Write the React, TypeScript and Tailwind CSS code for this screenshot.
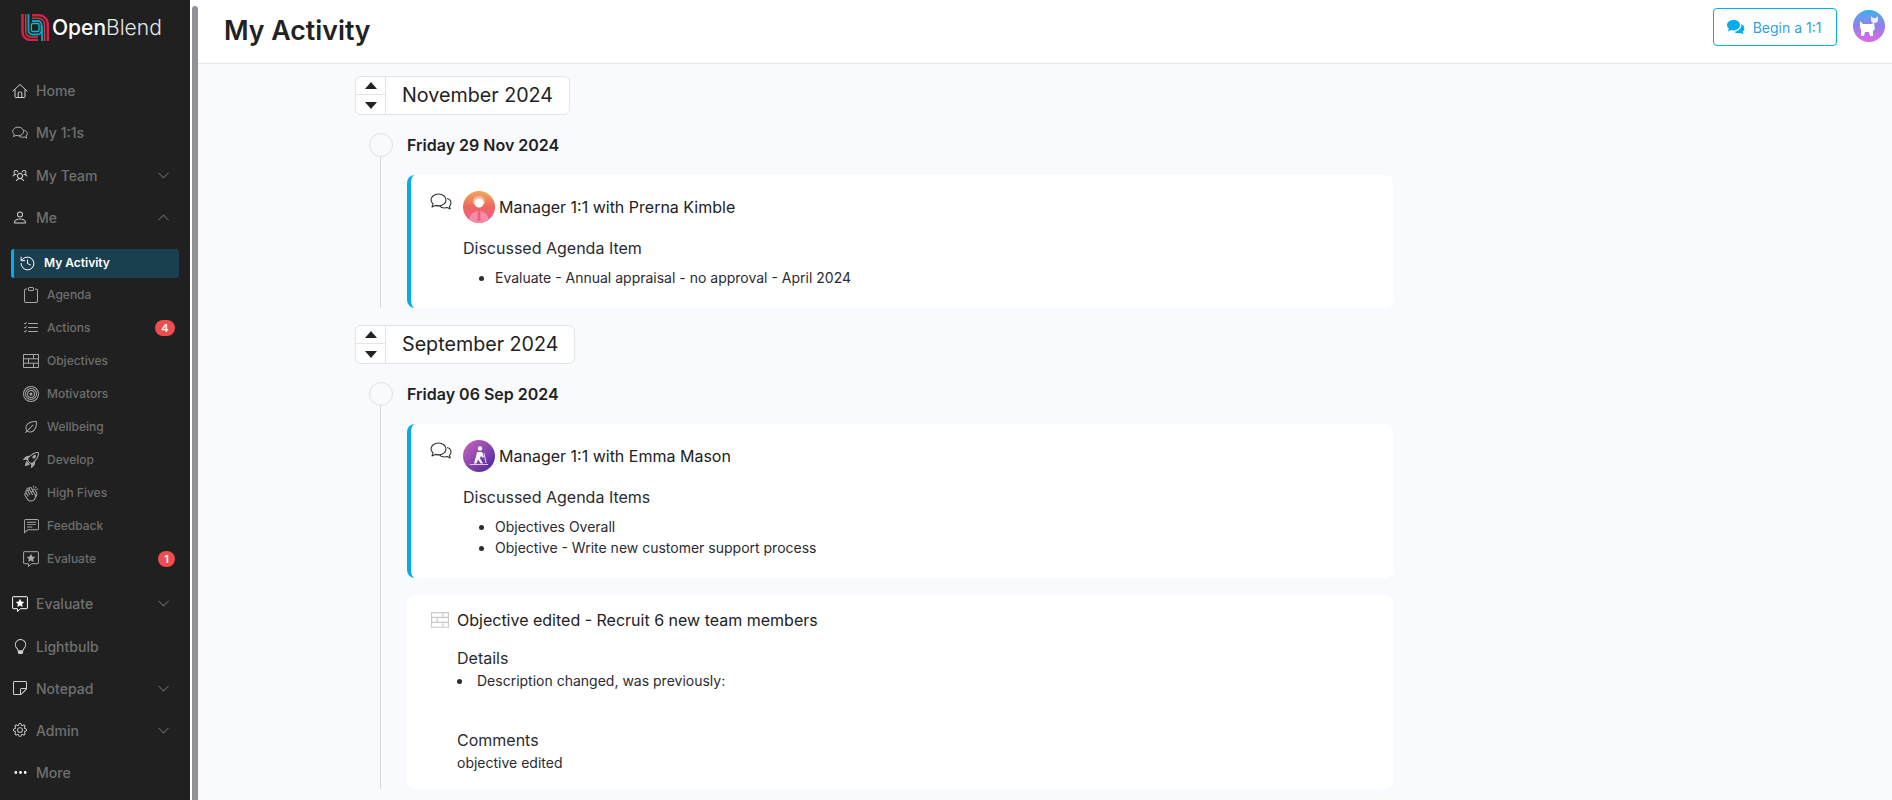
import type { ReactNode } from "react";
import {
  BsBullseye,
  BsChatLeftText,
  BsChevronDown,
  BsChevronUp,
  BsClipboard,
  BsGear,
  BsLightbulb,
  BsListCheck,
  BsPerson,
  BsRocketTakeoff,
  BsSticky,
  BsThreeDots,
} from "react-icons/bs";
import { PiHandsClapping, PiLeaf, PiUsersThree } from "react-icons/pi";
import { History } from "lucide-react";

const HomeIcon = () => (
  <svg width="16" height="16" viewBox="0 0 16 16" fill="none" stroke="currentColor" strokeWidth="1">
    <path d="M1 8l7-6.500L15 8" strokeLinecap="round" strokeLinejoin="round" />
    <path d="M3 6.500v7a1 1 0 0 0 1 1h8a1 1 0 0 0 1-1v-7" />
    <path d="M6.200 14.500V10a1 1 0 0 1 1-1h1.600a1 1 0 0 1 1 1v4.500" />
  </svg>
);

const ChatsIcon = ({ width = 17 }: { width?: number }) => (
  <svg width={width} height={(width * 17) / 22} viewBox="0 0 22 17" fill="none" stroke="currentColor" strokeWidth="1.100">
    <path d="M8.500 1C4.400 1 1 3.600 1 6.800c0 1.600.8 3 2.100 4.100L2 14l3.400-1.600c1 .3 2 .5 3.100.5 4.100 0 7.500-2.700 7.500-6S12.600 1 8.500 1z" strokeLinejoin="round" />
    <path d="M17 5.500c2.400.6 4 2.400 4 4.500 0 1.300-.6 2.500-1.600 3.400l.8 2.600-3-1.400c-.8.3-1.700.4-2.700.4-2 0-3.800-.7-4.900-1.800" strokeLinejoin="round" />
  </svg>
);

const ChatsFillIcon = () => (
  <svg width="20" height="16" viewBox="0 0 20 16" fill="#00aeef">
    <path d="M7.500 1C3.900 1 1 3.200 1 6c0 1.400.7 2.600 1.900 3.500L2 12.500l3.200-1.400c.7.2 1.500.3 2.300.3 3.600 0 6.500-2.300 6.500-5.400S11.100 1 7.500 1z" />
    <path d="M15.300 5c.1.300.1.700.1 1 0 3.400-3 6.200-7 6.700 1 1 2.500 1.500 4.100 1.500.7 0 1.400-.1 2-.3l2.900 1.300-.7-2.600c1-.8 1.600-1.900 1.600-3.100 0-1.900-1.200-3.600-3-4.500z" />
  </svg>
);

const BricksIcon = ({ width = 16 }: { width?: number }) => (
  <svg width={width} height={(width * 14) / 16} viewBox="0 0 16 14" fill="none" stroke="currentColor" strokeWidth="1">
    <path d="M.5.500h15v13H.5zM.5 4.800h15M.5 9.200h15M10.500.500v4.300M5.500 4.800v4.400M10.500 9.200v4.300" />
  </svg>
);

const StarChat = ({ size = 16 }: { size?: number }) => (
  <svg width={size} height={size} viewBox="0 0 16 16" fill="none">
    <path
      d="M1.200.700h13.600a.6.6 0 0 1 .6.6v10.800a.6.6 0 0 1-.6.6H8.500L5.500 15.500v-2.800H1.200a.6.6 0 0 1-.6-.6V1.300a.6.6 0 0 1 .6-.6z"
      stroke="currentColor"
      strokeWidth="1"
    />
    <path d="M8 2.800l1.300 2.700 3 .4-2.200 2 .6 3L8 9.400l-2.700 1.500.6-3-2.200-2 3-.4z" fill="currentColor" />
  </svg>
);

const Logo = () => (
  <svg width="28" height="27" viewBox="0 0 28 27" fill="none">
    <path d="M1.500 0v18a8 8 0 0 0 8 8H17" stroke="#d81e4a" strokeWidth="2.500" />
    <path d="M4.700 0v17.500a5.500 5.500 0 0 0 5.500 5.500H17" stroke="#b8413f" strokeWidth="1.600" />
    <path d="M11 1.200h7a8.800 8.800 0 0 1 8.800 8.800v17" stroke="#d81e4a" strokeWidth="2.400" />
    <path d="M11 4.200h6.500a6 6 0 0 1 6 6V27" stroke="#b8413f" strokeWidth="1.600" />
    <path d="M7.500 0v16.500a4 4 0 0 0 4 4h5a4 4 0 0 0 4-4v-6a3.500 3.500 0 0 0-3.500-3.500H11" stroke="#12a3c4" strokeWidth="1.800" />
    <path d="M21 12v15" stroke="#12a3c4" strokeWidth="1.800" />
    <path d="M10.400 11v5a1.500 1.500 0 0 0 1.500 1.500H16.500A1.500 1.500 0 0 0 18 16v-5a1.500 1.500 0 0 0-1.500-1.500H11.900A1.500 1.500 0 0 0 10.400 11z" stroke="#1bb7cf" strokeWidth="1.300" />
  </svg>
);

const TopItem = ({
  icon,
  label,
  chevron,
  white,
}: {
  icon: ReactNode;
  label: string;
  chevron?: "up" | "down";
  white?: boolean;
}) => (
  <div className="flex h-[42.2px] shrink-0 items-center pl-[12px] pr-[20px]">
    <span className={`flex w-[16px] justify-center ${white ? "text-white" : "text-[#d0d0d0]"}`}>{icon}</span>
    <span className="ml-[8px] flex-1 text-[14px] font-medium text-[#707070]">{label}</span>
    {chevron === "down" && <BsChevronDown size={13} className="text-[#707070]" />}
    {chevron === "up" && <BsChevronUp size={13} className="text-[#707070]" />}
  </div>
);

const SubItem = ({ icon, label, badge }: { icon: ReactNode; label: string; badge?: ReactNode }) => (
  <div className="flex h-[33px] shrink-0 items-center pl-[23px] pr-[15px]">
    <span className="flex w-[16px] justify-center text-[#a8a8a8]">{icon}</span>
    <span className="ml-[8px] flex-1 text-[12px] font-medium text-[#6e6e6e]">{label}</span>
    {badge}
  </div>
);

const Sidebar = () => (
  <aside className="flex h-[800px] w-[190px] shrink-0 flex-col overflow-hidden bg-[#202020]">
    <div className="flex h-[69.6px] shrink-0 pl-[21px] pt-[14px]">
      <Logo />
      <span className="ml-[3px] mt-[1px] text-[21px] leading-[26px] font-medium text-white">
        Open<span className="font-light text-[#e8e8e8]">Blend</span>
      </span>
    </div>
    <TopItem icon={<HomeIcon />} label="Home" />
    <TopItem icon={<ChatsIcon />} label="My 1:1s" />
    <TopItem icon={<PiUsersThree size={18} />} label="My Team" chevron="down" />
    <TopItem icon={<BsPerson size={17} />} label="Me" chevron="up" />

    {/* active row */}
    <div className="mx-[11px] mt-[10.4px] mb-[1px] flex h-[29px] shrink-0 items-center rounded-[3px] border-l-[3px] border-[#00aeef] bg-[#1a3f4f] pl-[5px]">
      <History size={17} strokeWidth={1.4} className="text-white" />
      <span className="ml-[8px] text-[12px] font-semibold text-white">My Activity</span>
    </div>
    <SubItem icon={<BsClipboard size={16} />} label="Agenda" />
    <SubItem
      icon={<BsListCheck size={18} />}
      label="Actions"
      badge={
        <span className="flex h-[16px] w-[20px] items-center justify-center rounded-full bg-[#ef4d50] text-[11px] font-semibold text-white">
          4
        </span>
      }
    />
    <SubItem icon={<BricksIcon />} label="Objectives" />
    <SubItem icon={<BsBullseye size={16} />} label="Motivators" />
    <SubItem icon={<PiLeaf size={18} />} label="Wellbeing" />
    <SubItem icon={<BsRocketTakeoff size={16} />} label="Develop" />
    <SubItem icon={<PiHandsClapping size={17} />} label="High Fives" />
    <SubItem icon={<BsChatLeftText size={15} />} label="Feedback" />
    <SubItem
      icon={<StarChat />}
      label="Evaluate"
      badge={
        <span className="flex h-[16px] w-[17px] items-center justify-center rounded-full bg-[#ef4d50] text-[11px] font-semibold text-white">
          1
        </span>
      }
    />
    <div className="h-[7px] shrink-0" />
    <TopItem icon={<StarChat />} label="Evaluate" chevron="down" white />
    <TopItem icon={<BsLightbulb size={15} />} label="Lightbulb" />
    <TopItem icon={<BsSticky size={16} />} label="Notepad" chevron="down" />
    <TopItem icon={<BsGear size={14} />} label="Admin" chevron="down" />
    <TopItem icon={<BsThreeDots size={15} className="text-white" />} label="More" />
  </aside>
);

const Stepper = ({ title }: { title: string }) => (
  <div className="flex h-[39px] w-fit items-stretch rounded-[6px] border border-[#e2e4e8] bg-white">
    <div className="flex w-[30px] flex-col border-r border-[#e2e4e8]">
      <div className="flex flex-1 items-center justify-center border-b border-[#e2e4e8]">
        <svg width="12" height="7" viewBox="0 0 12 7">
          <path d="M6 0L12 7H0z" fill="#222" />
        </svg>
      </div>
      <div className="flex flex-1 items-center justify-center pt-[2px]">
        <svg width="12" height="7" viewBox="0 0 12 7">
          <path d="M6 7L12 0H0z" fill="#222" />
        </svg>
      </div>
    </div>
    <div className="flex items-center pl-[16px] pr-[16px] pt-[1px] text-[19.7px] text-[#222]">{title}</div>
  </div>
);

const DateRow = ({ label }: { label: string }) => (
  <div className="mt-[18px] flex items-center pl-[14px]">
    <span className="h-[24px] w-[24px] rounded-full border border-[#dfe1e5] bg-[#f9fafd]" />
    <span className="ml-[14px] text-[16px] font-semibold text-[#222]">{label}</span>
  </div>
);

const PersonAvatar = () => (
  <span className="flex h-[32px] w-[32px] shrink-0 overflow-hidden rounded-full bg-gradient-to-b from-[#f0a85a] via-[#f0645f] to-[#ee5f97]">
    <svg width="32" height="32" viewBox="0 0 32 32">
      <path d="M10 11c0-4 2.500-6 6-6s6 2 6 6c0 1.500-1 3-2.500 3h-7C11 14 10 12.500 10 11z" fill="#f7b7a0" />
      <circle cx="16" cy="12" r="4.500" fill="#fff" />
      <path d="M6 32c0-8 4-12 10-12s10 4 10 12z" fill="#f58ba6" />
      <path d="M15 20h2l.6 10h-3.200z" fill="#ee5f7f" />
    </svg>
  </span>
);

const SkierAvatar = () => (
  <span className="flex h-[32px] w-[32px] shrink-0 overflow-hidden rounded-full bg-gradient-to-br from-[#d063bd] to-[#4a1f9e]">
    <svg width="32" height="32" viewBox="0 0 32 32">
      <circle cx="17" cy="8.500" r="2.200" fill="#fff" />
      <path d="M14 12h5l2 5-2 .6-1-2-1 3 3 5h-2.200l-2.800-4-1.600 4H11l2-7z" fill="#fff" />
      <path d="M7 24.500h18" stroke="#e6c8f0" strokeWidth="1" />
      <path d="M21 13l2 10" stroke="#fff" strokeWidth="0.800" />
    </svg>
  </span>
);

const CatAvatar = () => (
  <span className="flex h-[32px] w-[32px] shrink-0 overflow-hidden rounded-full bg-gradient-to-b from-[#22b0ee] via-[#8f7fe8] to-[#dd66e6]">
    <svg width="32" height="32" viewBox="0 0 32 32">
      <path d="M7 11l3 3h8l3-1 1 6-2 2v5h-3l-1-4h-4l-1 4H8v-6l-1-3z" fill="#fff" />
      <path d="M18 6l2 2h3l2-2v5l-2 2h-3l-2-2z" fill="#f2e8ff" />
    </svg>
  </span>
);

const MeetingCard = ({
  avatar,
  title,
  heading,
  items,
}: {
  avatar: ReactNode;
  title: string;
  heading: string;
  items: string[];
}) => (
  <div className="rounded-lg border-l-[4px] border-[#00aeef] bg-white pb-[20px] pl-[19px] pt-[16px]">
    <div className="flex">
      <span className="mt-[2px] text-[#333]">
        <ChatsIcon width={22} />
      </span>
      <div className="ml-[11px]">
        <div className="flex items-center">
          {avatar}
          <span className="ml-[4px] text-[16px] text-[#222]">{title}</span>
        </div>
        <div className="mt-[14px] text-[16px] leading-[22px] text-[#2b2b33]">{heading}</div>
        <ul className="mt-[8px] list-disc pl-[32px] text-[14px] leading-[21px] text-[#2b2b33]">
          {items.map((item) => (
            <li key={item}>{item}</li>
          ))}
        </ul>
      </div>
    </div>
  </div>
);

const ObjectiveCard = () => (
  <div className="mt-[17px] h-[194px] rounded-lg bg-white pl-[24px] pt-[13px] text-[#2b2b33]">
    <div className="flex items-center">
      <span className="text-[#c9c9c9]">
        <BricksIcon width={18} />
      </span>
      <span className="ml-[8px] text-[16px] text-[#222]">Objective edited - Recruit 6 new team members</span>
    </div>
    <div className="ml-[26px]">
      <div className="mt-[15px] text-[16px] leading-[22px]">Details</div>
      <ul className="mt-[1px] list-disc pl-[16px] text-[14px] leading-[21px]">
        <li className="pl-[4px]">Description changed, was previously:</li>
      </ul>
      <div className="mt-[38px] text-[16px] leading-[22px]">Comments</div>
      <div className="mt-[1px] text-[14px] leading-[21px]">objective edited</div>
    </div>
  </div>
);

export default function App() {
  return (
    <div className="flex h-[800px] overflow-hidden bg-white font-['Inter',sans-serif]">
      <Sidebar />
      {/* page scrollbar */}
      <div className="flex w-[8px] shrink-0 flex-col bg-white pl-[2px]">
        <div className="mt-[6px] flex-1 rounded-t-[3px] bg-[#929296]" />
      </div>

      <main className="flex min-w-0 flex-1 flex-col bg-[#f9fafd]">
        <header className="flex h-[64px] shrink-0 items-center justify-between border-b border-[#e4e6ea] bg-white pl-[26px] pr-[7px]">
          <h1 className="-mt-[3px] text-[26.7px] font-semibold text-[#222]">My Activity</h1>
          <div className="-mt-[9px] flex items-center">
            <button className="flex h-[38px] w-[124px] items-center justify-center gap-[7px] rounded-[4px] border border-[#00aeef] bg-white pr-[3px] text-[14px] text-[#2f9fe8]">
              <ChatsFillIcon />
              Begin a 1:1
            </button>
            <span className="mb-[2px] ml-[16px]">
              <CatAvatar />
            </span>
          </div>
        </header>

        <div className="ml-[157px] w-[1038px] pt-[12px]">
          <Stepper title="November 2024" />
          <DateRow label="Friday 29 Nov 2024" />
          <div className="ml-[25px] border-l border-[#d6d8dc] pl-[26px] pt-[18px]">
            <MeetingCard
              avatar={<PersonAvatar />}
              title="Manager 1:1 with Prerna Kimble"
              heading="Discussed Agenda Item"
              items={["Evaluate - Annual appraisal - no approval - April 2024"]}
            />
          </div>

          <div className="mt-[17px]">
            <Stepper title="September 2024" />
          </div>
          <DateRow label="Friday 06 Sep 2024" />
          <div className="ml-[25px] border-l border-[#d6d8dc] pl-[26px] pt-[18px]">
            <MeetingCard
              avatar={<SkierAvatar />}
              title="Manager 1:1 with Emma Mason"
              heading="Discussed Agenda Items"
              items={["Objectives Overall", "Objective - Write new customer support process"]}
            />
            <ObjectiveCard />
          </div>
        </div>
      </main>
    </div>
  );
}
